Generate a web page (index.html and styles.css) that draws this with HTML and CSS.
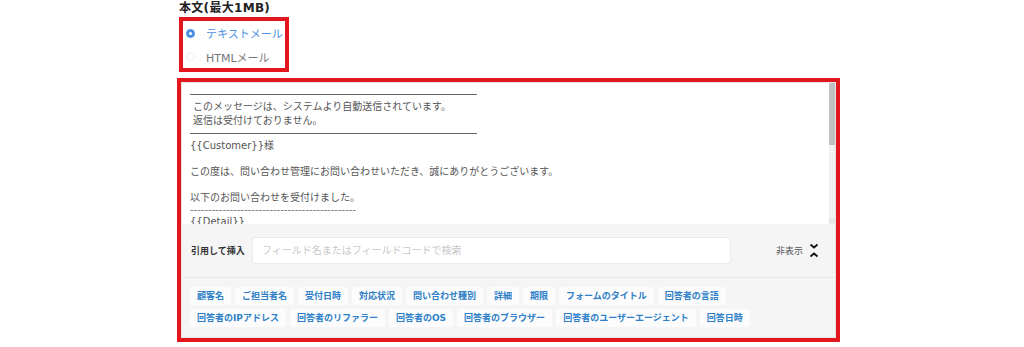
FILE: index.html
```html
<!DOCTYPE html>
<html>
<head>
  <title>本文設定</title>
  <link rel="stylesheet" href="styles.css">
</head>
<body>
  <div class="wrap">
    <h2 class="title">本文(最大1MB)</h2>

    <div class="mark radio-box">
      <label class="radio checked"><span class="dot"></span>テキストメール</label>
      <label class="radio"><span class="dot"></span>HTMLメール</label>
    </div>

    <div class="mark editor">
      <div class="editor-inner">
        <div class="body-area">
          <div class="body-text">
            <div class="rule"></div>
            <div class="notice">
              <div>このメッセージは、システムより自動送信されています。</div>
              <div>返信は受付けておりません。</div>
            </div>
            <div class="rule"></div>
            <div class="line">{{Customer}}様</div>
            <div class="line">&nbsp;</div>
            <div class="line">この度は、問い合わせ管理にお問い合わせいただき、誠にありがとうございます。</div>
            <div class="line">&nbsp;</div>
            <div class="line">以下のお問い合わせを受付けました。</div>
            <div class="dashes">----------------------------------------------</div>
            <div class="line">{{Detail}}</div>
          </div>
          <div class="scrollbar">
            <div class="thumb"></div>
            <div class="grip"></div>
          </div>
        </div>

        <div class="insert-panel">
          <div class="search-row">
            <span class="search-label">引用して挿入</span>
            <input class="search" type="text" placeholder="フィールド名またはフィールドコードで検索">
            <span class="toggle">非表示
              <svg width="10" height="15" viewBox="0 0 10 15">
                <path d="M1.5 1.5 L5 4.5 L8.5 1.5" fill="none" stroke="#111" stroke-width="1.8"/>
                <path d="M1.5 13.5 L5 10.5 L8.5 13.5" fill="none" stroke="#111" stroke-width="1.8"/>
              </svg>
            </span>
          </div>
          <div class="tags">
            <div class="tag-row">
              <span class="tag">顧客名</span>
              <span class="tag">ご担当者名</span>
              <span class="tag">受付日時</span>
              <span class="tag">対応状況</span>
              <span class="tag">問い合わせ種別</span>
              <span class="tag">詳細</span>
              <span class="tag">期限</span>
              <span class="tag">フォームのタイトル</span>
              <span class="tag">回答者の言語</span>
            </div>
            <div class="tag-row">
              <span class="tag">回答者のIPアドレス</span>
              <span class="tag">回答者のリファラー</span>
              <span class="tag">回答者のOS</span>
              <span class="tag">回答者のブラウザー</span>
              <span class="tag">回答者のユーザーエージェント</span>
              <span class="tag">回答日時</span>
            </div>
          </div>
        </div>
      </div>
    </div>
  </div>
</body>
</html>
```

FILE: styles.css
```css
body { margin: 0; background: #fff; font-family: "DejaVu Sans", "Noto Sans CJK JP", sans-serif; color: #555; }
.wrap { margin-left: 179px; width: 660px; }
.title { margin: 0; font-size: 12px; line-height: 16px; font-weight: bold; color: #222; letter-spacing: 0.3px; }

.mark { border: 4px solid #e3161e; }
.radio-box { margin-top: 1px; width: 102px; }
.radio { display: flex; align-items: center; height: 23px; font-size: 11px; color: #777; }
.radio:first-child { height: 24px; }
.radio .dot { width: 7px; height: 7px; margin: 0 11px 0 3px; border: 1px solid #eee; border-radius: 50%; background: #fff; }
.radio.checked { color: #4a90e2; }
.radio.checked .dot { background: #4a90e2; border-color: #4a90e2; position: relative; }
.radio.checked .dot::after { content: ""; position: absolute; left: 2px; top: 2px; width: 3px; height: 3px; border-radius: 50%; background: #fff; }

.editor { margin: 6px 0 0 -2px; width: 655px; }
.editor-inner { border: 1px solid #e4e4e4; }
.body-area { display: flex; height: 141px; background: #fff; }
.body-text { flex: 1; overflow: hidden; padding: 11px 8px 0 8px; font-size: 10px; line-height: 13px; }
.rule { width: 287px; border-top: 1px solid #666; }
.notice { padding: 5px 0 5px 3px; line-height: 14px; }
.rule + .line { margin-top: 5px; }
.dashes { line-height: 11px; color: #777; white-space: nowrap; }
.scrollbar { width: 6px; background: #f1f1f1; display: flex; flex-direction: column; }
.thumb { height: 62px; background: #c1c1c1; }
.grip { margin-top: auto; height: 6px; background: #e8e8e8; }

.insert-panel { background: #f5f5f5; }
.search-row { display: flex; align-items: center; height: 53px; padding: 0 16px 0 9px; border-bottom: 1px solid #e6e6e6; }
.search-label { font-size: 9px; font-weight: bold; color: #333; width: 61px; }
.search { width: 479px; height: 27px; box-sizing: border-box; border: 1px solid #ebebeb; border-radius: 3px; background: #fff; padding: 0 9px; font-family: inherit; font-size: 10px; outline: none; }
.search::placeholder { color: #c8c8c8; }
.toggle { margin-left: auto; display: flex; align-items: center; gap: 6px; font-size: 9px; color: #555; }

.tags { display: flex; flex-direction: column; gap: 4px; padding: 9px 8px 10px 8px; }
.tag-row { display: flex; gap: 4px; }
.tag { height: 18px; line-height: 18px; padding: 0 7px; background: #fcfcfc; border-radius: 3px; font-size: 9px; font-weight: bold; color: #2f80c8; }
```
